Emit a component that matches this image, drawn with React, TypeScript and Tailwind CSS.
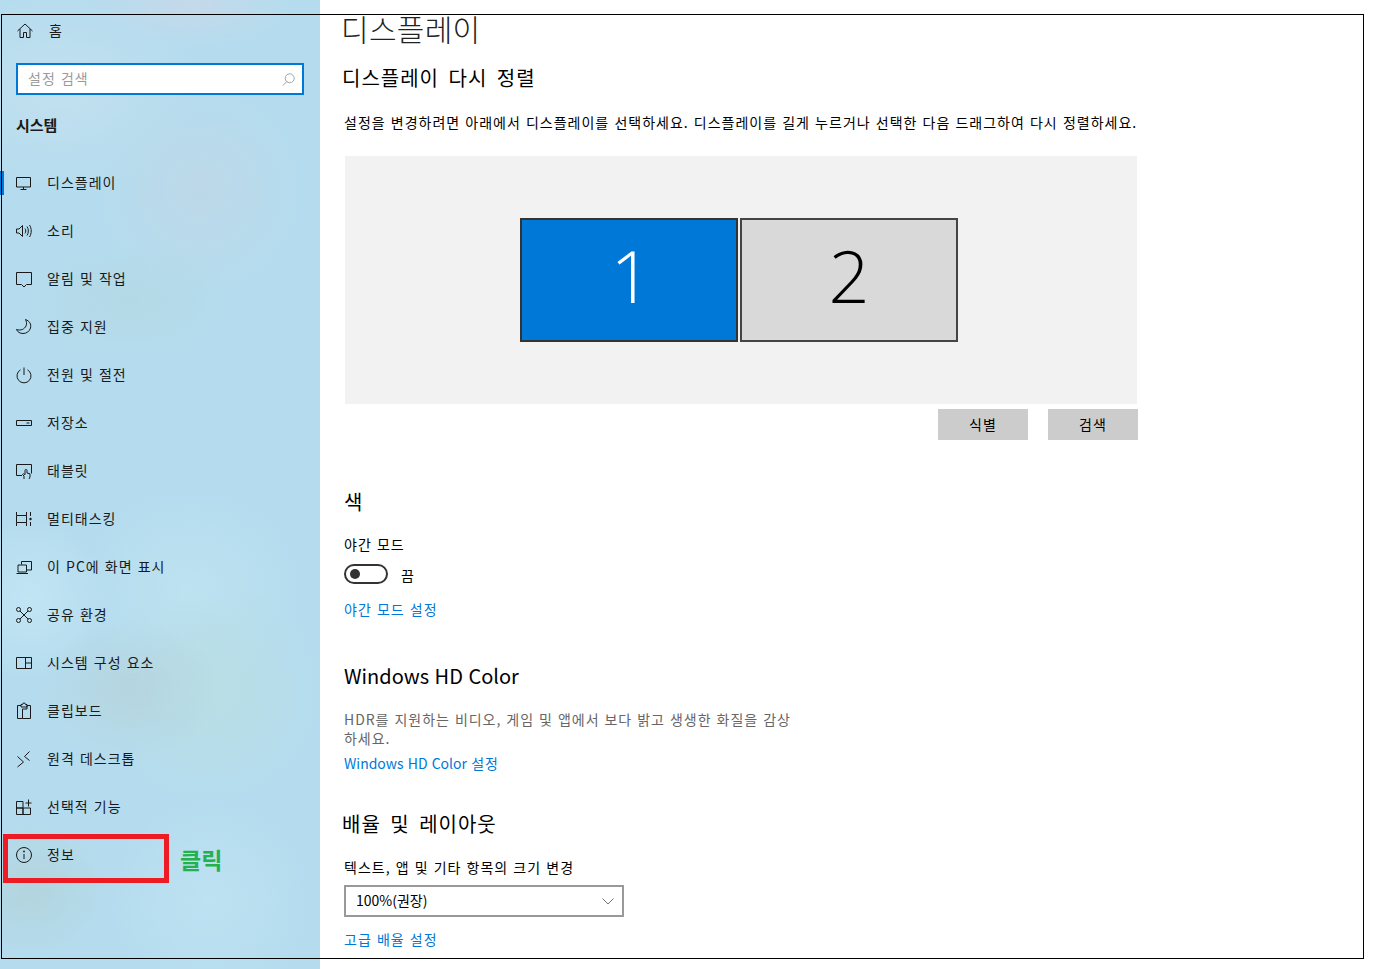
import React from 'react';

const cjk = "font-['Noto_Sans_CJK_KR','Noto_Sans',sans-serif]";

const iconProps = {
  width: 18,
  height: 18,
  viewBox: '0 0 18 18',
  fill: 'none',
  stroke: '#1a1a1a',
  strokeWidth: 1,
} as const;

const HomeIcon = () => (
  <svg {...iconProps}>
    <path d="M1.5 9 9 2l7.5 7M4 7v8.5h3.5v-5h3v5H14V7" />
  </svg>
);
const MonitorIcon = () => (
  <svg {...iconProps}>
    <path d="M1.5 3.500h14v9.500h-14zM8.500 13v2M5.500 15.500h6" />
  </svg>
);
const SoundIcon = () => (
  <svg {...iconProps}>
    <path d="M1.500 7v4h2.500l3.500 3.500v-11L4 7zM10 6.500c1 1.500 1 3.500 0 5M12 4.500c1.800 2.500 1.800 6.500 0 9M14.500 3c2.300 3.500 2.300 8.500 0 12" />
  </svg>
);
const BubbleIcon = () => (
  <svg {...iconProps}>
    <path d="M1.500 2.500h15v12h-5l-2.500 2.500-2.500-2.500h-5z" />
  </svg>
);
const MoonIcon = () => (
  <svg {...iconProps}>
    <path d="M10.500 1.500c4 1.500 6 4.500 5 8.500-1 3.500-4 5.500-7.500 5.500-3 0-5.500-1.500-6.500-4 4.500 1.500 8-.5 9.500-3.500 1-2.300.5-4.500-.5-6.500z" />
  </svg>
);
const PowerIcon = () => (
  <svg {...iconProps}>
    <path d="M9 1.500v7.500M5.500 3.800a7 7 0 1 0 7 0" />
  </svg>
);
const StorageIcon = () => (
  <svg {...iconProps}>
    <path d="M1.500 6.500h15v5h-15zM11.500 9h3" />
  </svg>
);
const TabletIcon = () => (
  <svg {...iconProps}>
    <path d="M7 13.500H1.500v-11h15v9M9 17v-3l-1.500-1.500.8-.8 1.700 1V8.500a1 1 0 0 1 2 0V11l3 .8V15l-1 2" />
  </svg>
);
const MultitaskIcon = () => (
  <svg {...iconProps}>
    <path d="M1.500 2v3.500h10V2M1.500 5.500v7M11.500 5.500v7M1.500 16v-3.500h10V16M15.500 2v4M15.500 12v4" />
    <circle cx="15.500" cy="9" r="1.200" fill="#1a1a1a" stroke="none" />
  </svg>
);
const ProjectIcon = () => (
  <svg {...iconProps}>
    <path d="M6.500 6.500V3.500h10v8.500H12M3 7h8.500v7H3zM1.500 15.500h11.500" />
  </svg>
);
const ShareIcon = () => (
  <svg {...iconProps}>
    <circle cx="3.500" cy="3.500" r="2" />
    <circle cx="14.500" cy="3.500" r="2" />
    <circle cx="3.500" cy="14.500" r="2" />
    <circle cx="14.500" cy="14.500" r="2" />
    <path d="m5 5 8 8M13 5l-8 8" />
  </svg>
);
const ComponentsIcon = () => (
  <svg {...iconProps}>
    <path d="M1.500 3.500h15v11h-15zM10.500 3.500v11M10.500 9h6" />
  </svg>
);
const ClipboardIcon = () => (
  <svg {...iconProps}>
    <path d="M6 3.500H2.500v13h5M12 3.500h3.500v13h-8V7H12zM6 5V2.500h1.500a1.500 1.500 0 0 1 3 0H12V5z" />
  </svg>
);
const RemoteIcon = () => (
  <svg {...iconProps}>
    <path d="m2.500 6.500 6 5.500-6 5M14.500 1.500l-5 5 5 4" />
  </svg>
);
const FeaturesIcon = () => (
  <svg {...iconProps}>
    <path d="M1.500 3.500h6.500v6.500H1.500zM1.500 10h6.500v6.500H1.500zM8 10h7.500v6.500H8zM10.500 5h6M13.500 1.500v7" />
  </svg>
);
const InfoIcon = () => (
  <svg {...iconProps}>
    <circle cx="9" cy="9" r="7.500" />
    <path d="M9 8v5" />
    <circle cx="9" cy="5.500" r=".9" fill="#1a1a1a" stroke="none" />
  </svg>
);

const navItems = [
  { label: '디스플레이', icon: <MonitorIcon />, active: true },
  { label: '소리', icon: <SoundIcon /> },
  { label: '알림 및 작업', icon: <BubbleIcon /> },
  { label: '집중 지원', icon: <MoonIcon /> },
  { label: '전원 및 절전', icon: <PowerIcon /> },
  { label: '저장소', icon: <StorageIcon /> },
  { label: '태블릿', icon: <TabletIcon /> },
  { label: '멀티태스킹', icon: <MultitaskIcon /> },
  { label: '이 PC에 화면 표시', icon: <ProjectIcon /> },
  { label: '공유 환경', icon: <ShareIcon /> },
  { label: '시스템 구성 요소', icon: <ComponentsIcon /> },
  { label: '클립보드', icon: <ClipboardIcon /> },
  { label: '원격 데스크톱', icon: <RemoteIcon /> },
  { label: '선택적 기능', icon: <FeaturesIcon /> },
  { label: '정보', icon: <InfoIcon /> },
];

function Sidebar() {
  return (
    <aside className="w-[320px] shrink-0 pt-[7px] text-[14px] tracking-[1px] text-[#1a1a1a] [word-spacing:1px] bg-[#b5dcee] bg-[radial-gradient(ellipse_90px_70px_at_130px_690px,#b5d5df,transparent),radial-gradient(ellipse_110px_110px_at_210px_690px,#b9dee4,transparent),radial-gradient(ellipse_80px_70px_at_30px_890px,#b2d4dd,transparent),radial-gradient(ellipse_110px_100px_at_190px_590px,#bde2f1,transparent),radial-gradient(ellipse_100px_100px_at_200px_190px,#bdd8e8,transparent),radial-gradient(ellipse_100px_40px_at_190px_5px,#c5d9ea,transparent),radial-gradient(ellipse_140px_100px_at_60px_90px,#c2e0ef,transparent),radial-gradient(ellipse_100px_100px_at_210px_900px,#bde2f2,transparent),radial-gradient(ellipse_110px_60px_at_130px_300px,#b4d9e6,transparent),radial-gradient(ellipse_80px_80px_at_30px_600px,#c2e5f4,transparent)]">
      <div className="flex h-[48px] items-center">
        <span className="ml-[16px] flex w-[33px]">
          <HomeIcon />
        </span>
        <span className="pb-[2px]">홈</span>
      </div>
      <div className="mx-[16px] mt-[8px] flex h-[32px] items-center justify-between border-2 border-[#0078d7] bg-white pl-[10px] pr-[7px] text-[#9a9a9a]">
        <span className="pb-[2px]">설정 검색</span>
        <svg width="13" height="13" viewBox="0 0 16 16" fill="none" stroke="#a0a0a0" strokeWidth="1.200">
          <circle cx="9.500" cy="6.500" r="5.500" />
          <path d="m6 10.500-5 5" />
        </svg>
      </div>
      <div className="mt-[15px] flex h-[30px] items-center pl-[16px] text-[15px] font-bold tracking-normal">시스템</div>
      <nav className="mt-[19px]">
        {navItems.map((item) => (
          <div key={item.label} className="relative flex h-[48px] items-center pl-[15px]">
            {item.active && <span className="absolute left-0 top-[12px] h-[24px] w-[4px] bg-[#0078d7]" />}
            <span className="flex w-[32px] shrink-0">{item.icon}</span>
            <span className="pb-[2px]">{item.label}</span>
          </div>
        ))}
      </nav>
    </aside>
  );
}

function Monitor({ n, active }: { n: string; active?: boolean }) {
  return (
    <div
      className={
        active
          ? "flex h-[124px] w-[218px] items-center justify-center border-2 border-[#333] bg-[#0078d7] pb-[10px] pl-[4px] font-['Open_Sans'] text-[72px] font-light leading-none tracking-normal text-white"
          : "flex h-[124px] w-[218px] items-center justify-center border-2 border-[#444] bg-[#d9d9d9] pb-[10px] font-['Open_Sans'] text-[72px] font-light leading-none tracking-normal text-black"
      }
    >
      {n}
    </div>
  );
}

function Content() {
  return (
    <main className="min-w-0 flex-1 pl-[22px] text-[14px] tracking-[1px] text-black [word-spacing:1px]">
      <h1 className="-ml-[1px] mt-[6px] h-[44px] text-[30px] font-light leading-[44px] tracking-[0.3px] text-[#222]">디스플레이</h1>
      <h2 className="mt-[13px] h-[30px] text-[20px] font-normal leading-[30px] [word-spacing:4px]">디스플레이 다시 정렬</h2>
      <p className="ml-[2px] mt-[17px] h-[24px] leading-[24px]">
        설정을 변경하려면 아래에서 디스플레이를 선택하세요. 디스플레이를 길게 누르거나 선택한 다음 드래그하여 다시 정렬하세요.
      </p>
      <div className="ml-[3px] mt-[22px] flex h-[248px] w-[792px] items-center justify-center gap-[2px] bg-[#f2f2f2] pb-[1px] pr-[4px]">
        <Monitor n="1" active />
        <Monitor n="2" />
      </div>
      <div className="ml-[3px] mt-[5px] flex w-[793px] justify-end gap-[20px]">
        <button className="h-[31px] w-[90px] bg-[#ccc]">식별</button>
        <button className="h-[31px] w-[90px] bg-[#ccc]">검색</button>
      </div>
      <h3 className="ml-[2px] mt-[47px] h-[30px] text-[20px] leading-[30px] tracking-normal">색</h3>
      <div className="ml-[2px] mt-[15px] h-[24px] leading-[24px]">야간 모드</div>
      <div className="ml-[2px] mt-[8px] flex h-[20px] items-center">
        <span className="flex h-[20px] w-[44px] items-center rounded-full border-2 border-[#333] pl-[4px]">
          <span className="h-[10px] w-[10px] rounded-full bg-[#333]" />
        </span>
        <span className="ml-[13px] pt-[2px]">끔</span>
      </div>
      <a className="ml-[2px] mt-[13px] block h-[24px] leading-[24px] text-[#0078d7]">야간 모드 설정</a>
      <h3 className="ml-[2px] mt-[40px] h-[30px] text-[20px] leading-[30px] tracking-normal">Windows HD Color</h3>
      <p className="ml-[2px] mt-[19px] w-[450px] leading-[19px] tracking-[0.95px] text-[#666]">
        HDR를 지원하는 비디오, 게임 및 앱에서 보다 밝고 생생한 화질을 감상하세요.
      </p>
      <a className="ml-[2px] mt-[3px] block h-[24px] leading-[24px] text-[#0078d7] tracking-normal">
        Windows HD Color <span className="tracking-[1px]">설정</span>
      </a>
      <h3 className="mt-[34px] h-[30px] text-[20px] leading-[30px] [word-spacing:4px]">배율 및 레이아웃</h3>
      <div className="ml-[2px] mt-[16px] h-[24px] leading-[24px]">텍스트, 앱 및 기타 항목의 크기 변경</div>
      <div className="ml-[2px] mt-[6px] flex h-[32px] w-[280px] items-center justify-between border-2 border-[#999] pl-[10px] pr-[8px] tracking-normal">
        <span className="pb-[2px]">100%(권장)</span>
        <svg width="12" height="7" viewBox="0 0 12 7" fill="none" stroke="#777" strokeWidth="1">
          <path d="m.5.5 5.500 5.500 5.500-5.500" />
        </svg>
      </div>
      <a className="ml-[2px] mt-[10px] block h-[24px] leading-[24px] text-[#0078d7]">고급 배율 설정</a>
    </main>
  );
}

export default function App() {
  return (
    <div className={`relative flex h-[969px] w-[1374px] overflow-hidden bg-white ${cjk}`}>
      <Sidebar />
      <Content />
      {/* screenshot annotations laid over the window */}
      <div className="pointer-events-none absolute left-[1px] top-[14px] h-[945px] w-[1363px] border border-black" />
      <div className="pointer-events-none absolute left-[3px] top-[834px] h-[49px] w-[166px] border-[5px] border-[#ed1c24]" />
      <span className="absolute left-[180px] top-[843px] text-[23px] font-bold leading-[32px] text-[#22b14c]">클릭</span>
    </div>
  );
}
